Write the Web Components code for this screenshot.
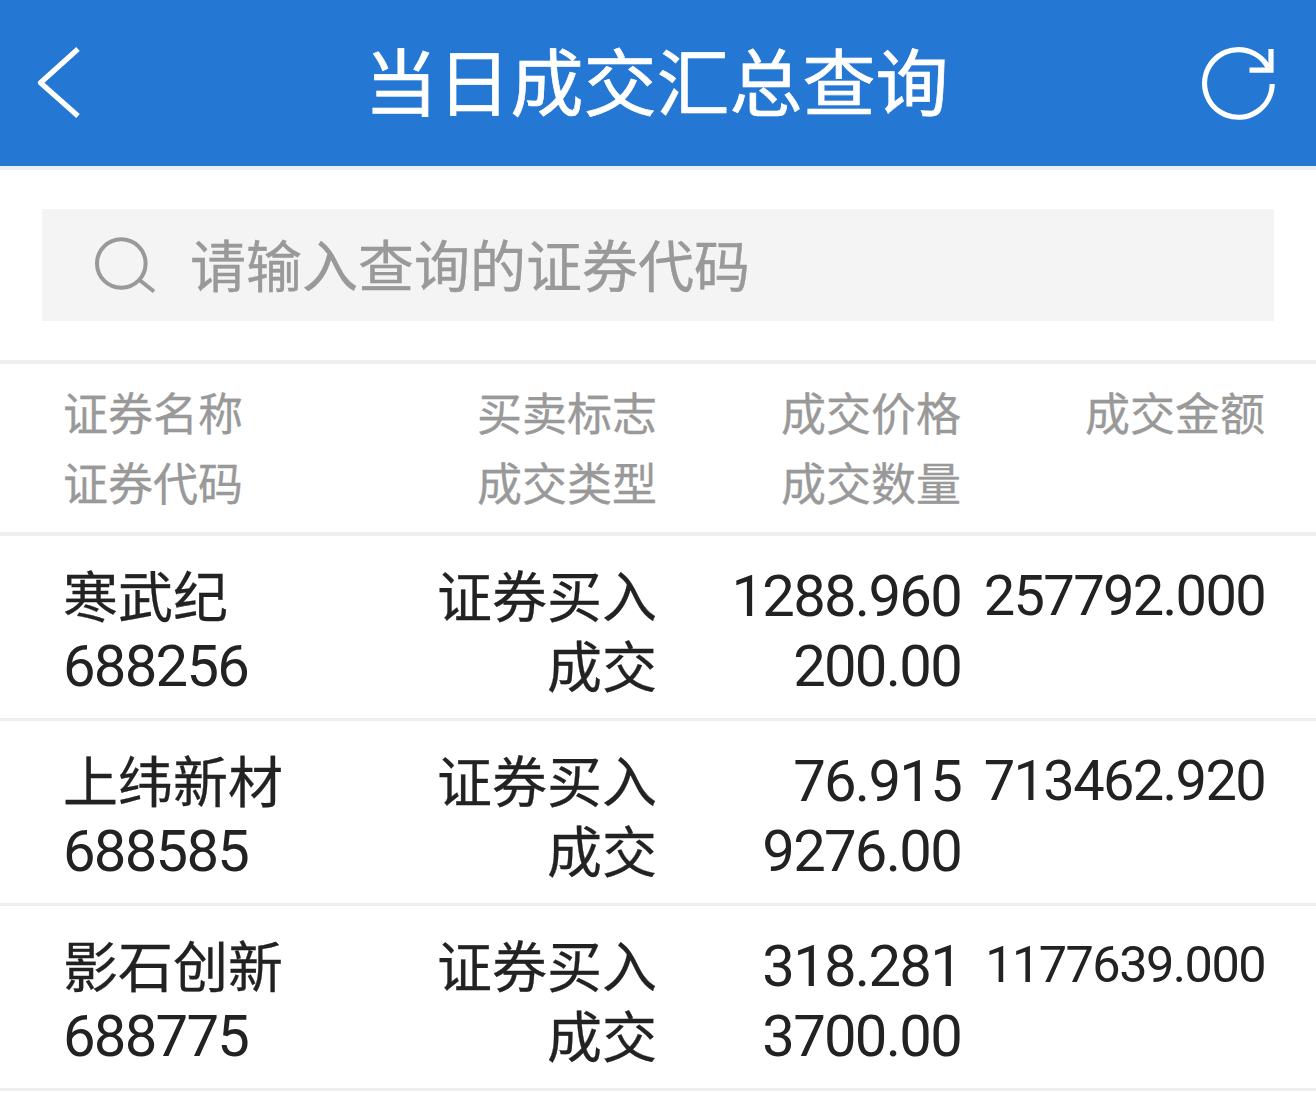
<!DOCTYPE html>
<html lang="zh-CN">
<head>
<meta charset="utf-8">
<title>当日成交汇总查询</title>
<style>
    body {
        margin: 0;
        background: #ffffff;
        overflow: hidden;
        font-family: Roboto, "Noto Sans CJK SC", sans-serif;
    }
</style>
</head>
<body>

<trade-page></trade-page>

<script>
const navBar = document.createElement('template');
navBar.innerHTML = `
    <style>

        :host {
            display: flex;
            justify-content: space-between;
            align-items: center;
            height: 166px;
            background: #2577d4;
            border-bottom: 4px solid #eceff0;
            color: #ffffff;
        }

        svg {
            display: block;
            width: 120px;
            height: 166px;
            fill: none;
            stroke: currentColor;
            stroke-width: 5.2;
        }

        h1 {
            height: 166px;
            margin: 0;
            padding-right: 3px;
            font-size: 73px;
            font-weight: 400;
            line-height: 171px;
            -webkit-text-stroke: 0.7px;
        }

    </style>

    <svg viewBox="0 0 120 166"><path d="M78 49L40.5 82.7L78 116" stroke-linejoin="round"/></svg>
    <h1><slot></slot></h1>
    <svg viewBox="0 0 120 166">
        <path d="M76.2 84A33.8 33.8 0 1 1 72.2 67.5"/>
        <path d="M75 49V70.2H53.5"/>
    </svg>
`;

const searchBox = document.createElement('template');
searchBox.innerHTML = `
    <style>

        :host {
            display: flex;
            align-items: center;
            height: 112px;
            margin: 39px 42px;
            background: #f4f4f4;
            color: #999999;
            font-size: 56px;
            line-height: 119px;
        }

        svg {
            width: 64px;
            height: 64px;
            margin: 0 34px 0 50px;
            fill: none;
            stroke: currentColor;
            stroke-width: 4;
        }

        span {
            height: 112px;
            -webkit-text-stroke: 0.4px;
        }

    </style>

    <svg viewBox="0 0 64 64">
        <circle cx="29.3" cy="30.5" r="24.3"/>
        <path d="M47.5 47L62 58.5"/>
    </svg>
    <span><slot></slot></span>
`;

const tradeRow = document.createElement('template');
tradeRow.innerHTML = `
    <style>

        :host {
            display: grid;
            grid-template-columns: 254px 340px 304px 304px;
            padding: 26px 51px 16px 63px;
            border-bottom: 3px solid #eeeeee;
            color: #222222;
            font-size: 55px;
            line-height: 73px;
            white-space: nowrap;
        }

        :host([head]) {
            padding-top: 15px;
            padding-bottom: 13px;
            border-top: 4px solid #eeeeee;
            border-bottom-width: 4px;
            color: #999999;
            font-size: 45px;
            line-height: 74px;
        }

    </style>

    <slot></slot>
`;

const tradeCell = document.createElement('template');
tradeCell.innerHTML = `
    <style>

        :host {
            display: flex;
            flex-direction: column;
            align-items: flex-end;
        }

        :host([start]) {
            align-items: flex-start;
        }

        span {
            display: block;
            height: 70px;
            -webkit-text-stroke: 0.3px;
        }

        .number {
            font-size: 58px;
            line-height: 69px;
            letter-spacing: -0.03em;
            -webkit-text-stroke: 0;
        }

    </style>
`;

class NavBar extends HTMLElement {
    constructor() {
        super();
        this.attachShadow({ mode: 'open' });
        this.shadowRoot.appendChild(navBar.content.cloneNode(true));
    };
};

class SearchBox extends HTMLElement {
    constructor() {
        super();
        this.attachShadow({ mode: 'open' });
        this.shadowRoot.appendChild(searchBox.content.cloneNode(true));
    };
};

class TradeRow extends HTMLElement {
    constructor() {
        super();
        this.attachShadow({ mode: 'open' });
        this.shadowRoot.appendChild(tradeRow.content.cloneNode(true));
    };
};

class TradeCell extends HTMLElement {
    constructor() {
        super();
        this.attachShadow({ mode: 'open' });
        this.shadowRoot.appendChild(tradeCell.content.cloneNode(true));
    };

    addLine(text) {
        const line = document.createElement('span');
        line.textContent = text;

        if (/^[\d.]+$/.test(text)) {
            line.className = 'number';
            // long amounts shrink so they stay inside the column
            if (text.length > 10) {
                line.style.fontSize = '50.4px';
                line.style.lineHeight = '65px';
            } else if (text.length > 9) {
                line.style.fontSize = '56px';
                line.style.lineHeight = '69px';
            }
        }

        this.shadowRoot.appendChild(line);
    };

    connectedCallback() {
        this.getAttribute('lines').split('|').forEach(text => this.addLine(text));
    };
};

class TradePage extends HTMLElement {
    constructor() {
        super();
        this.attachShadow({ mode: 'open' });
        this.shadowRoot.innerHTML = `
            <style>
                :host { display: block; }
            </style>

            <nav-bar>当日成交汇总查询</nav-bar>
            <search-box>请输入查询的证券代码</search-box>
        `;
    };

    addRow(cells, head) {
        const row = document.createElement('trade-row');
        row.toggleAttribute('head', head);

        cells.forEach((lines, i) => {
            const cell = document.createElement('trade-cell');
            cell.setAttribute('lines', lines);
            cell.toggleAttribute('start', i === 0);
            row.appendChild(cell);
        });

        this.shadowRoot.appendChild(row);
    };

    connectedCallback() {
        this.addRow(['证券名称|证券代码', '买卖标志|成交类型', '成交价格|成交数量', '成交金额'], true);
        this.addRow(['寒武纪|688256', '证券买入|成交', '1288.960|200.00', '257792.000'], false);
        this.addRow(['上纬新材|688585', '证券买入|成交', '76.915|9276.00', '713462.920'], false);
        this.addRow(['影石创新|688775', '证券买入|成交', '318.281|3700.00', '1177639.000'], false);
    };
};

customElements.define('nav-bar', NavBar);
customElements.define('search-box', SearchBox);
customElements.define('trade-row', TradeRow);
customElements.define('trade-cell', TradeCell);
customElements.define('trade-page', TradePage);
</script>
</body>
</html>
